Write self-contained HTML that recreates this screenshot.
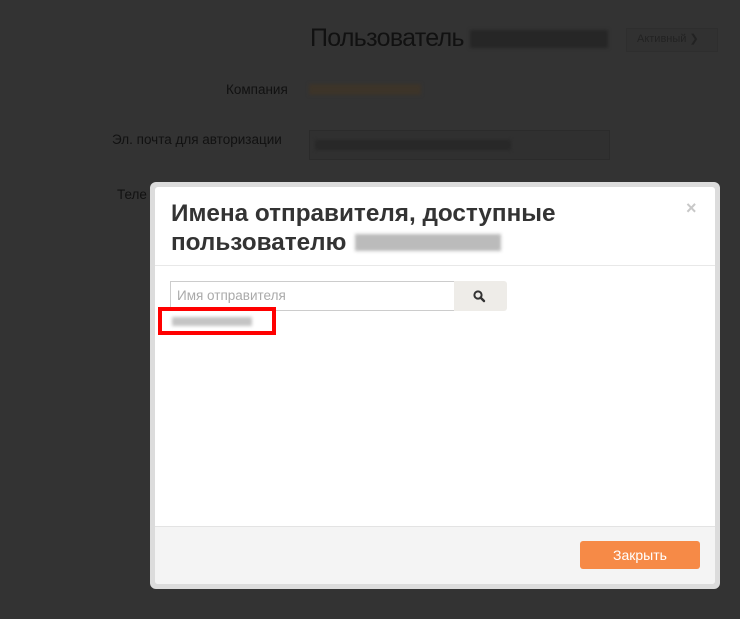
<!DOCTYPE html>
<html><head><meta charset="utf-8"><style>
body{margin:0;width:740px;height:619px;background:#333;font-family:"Liberation Sans",sans-serif;position:relative;overflow:hidden}
.a{position:absolute}
.blur{position:absolute;filter:blur(1.5px)}
</style></head><body>
<div class="a" style="left:310px;top:24px;font-size:25px;color:#111;letter-spacing:-0.7px">Пользователь</div>
<div class="blur" style="left:470px;top:30px;width:138px;height:18px;background:#262626"></div>
<div class="a" style="left:626px;top:28px;width:90px;height:22px;border:1px solid #2e2e2e;background:#313131"></div>
<div class="a" style="left:637px;top:32px;font-size:11px;color:#222">Активный ❯</div>
<div class="a" style="left:226px;top:82px;font-size:13.5px;color:#111">Компания</div>
<div class="blur" style="left:309px;top:84px;width:112px;height:11px;background:#3d3429"></div>
<div class="a" style="left:112px;top:132px;font-size:13.5px;color:#111">Эл. почта для авторизации</div>
<div class="a" style="left:309px;top:130px;width:299px;height:28px;border:1px solid #2b2b2b;background:#303030"></div>
<div class="blur" style="left:315px;top:140px;width:196px;height:10px;background:#282828"></div>
<div class="a" style="left:117px;top:187px;font-size:13.5px;color:#111">Теле</div>

<div class="a" style="left:150px;top:182px;width:570px;height:407px;background:#dcdcdc;border-radius:6px"></div>
<div class="a" style="left:155px;top:187px;width:560px;height:397px;background:#fff;border-radius:3px;overflow:hidden">
  <div class="a" style="left:16px;top:12px;font-size:24.3px;font-weight:bold;color:#333;line-height:29px">Имена отправителя, доступные<br>пользователю</div>
  <div class="blur" style="left:200px;top:47px;width:146px;height:17px;background:#aaa;opacity:.8"></div>
  <div class="a" style="left:531px;top:11px;font-size:18px;font-weight:bold;color:#c8c8c8">×</div>
  <div class="a" style="left:0;top:78px;width:560px;height:1px;background:#e8e8e8"></div>
  <div class="a" style="left:15px;top:94px;height:28px;border:1px solid #ccc;font-size:13.5px;color:#aaa;line-height:28px;padding-left:6px;width:277px">Имя отправителя</div>
  <div class="a" style="left:299px;top:94px;width:53px;height:30px;background:#eeece8;border-radius:0 3px 3px 0">
    <svg class="a" style="left:19px;top:9px" width="13" height="13" viewBox="0 0 13 13"><circle cx="5" cy="5" r="3.6" fill="none" stroke="#333" stroke-width="2"/><path d="M7.6 7.6L11 11" stroke="#333" stroke-width="2.4" stroke-linecap="round"/></svg>
  </div>
  <div class="a" style="left:3px;top:120px;width:110px;height:20px;border:4px solid #f00"></div>
  <div class="blur" style="left:17px;top:130px;width:80px;height:9px;background:#c4c4c4"></div>
  <div class="a" style="left:0;top:339px;width:560px;height:58px;background:#f4f4f4;border-top:1px solid #e3e3e3"></div>
  <div class="a" style="left:425px;top:354px;width:120px;height:28px;background:#f68a47;border-radius:3px;color:#fff;font-size:14px;text-align:center;line-height:28px">Закрыть</div>
</div>
</body></html>
